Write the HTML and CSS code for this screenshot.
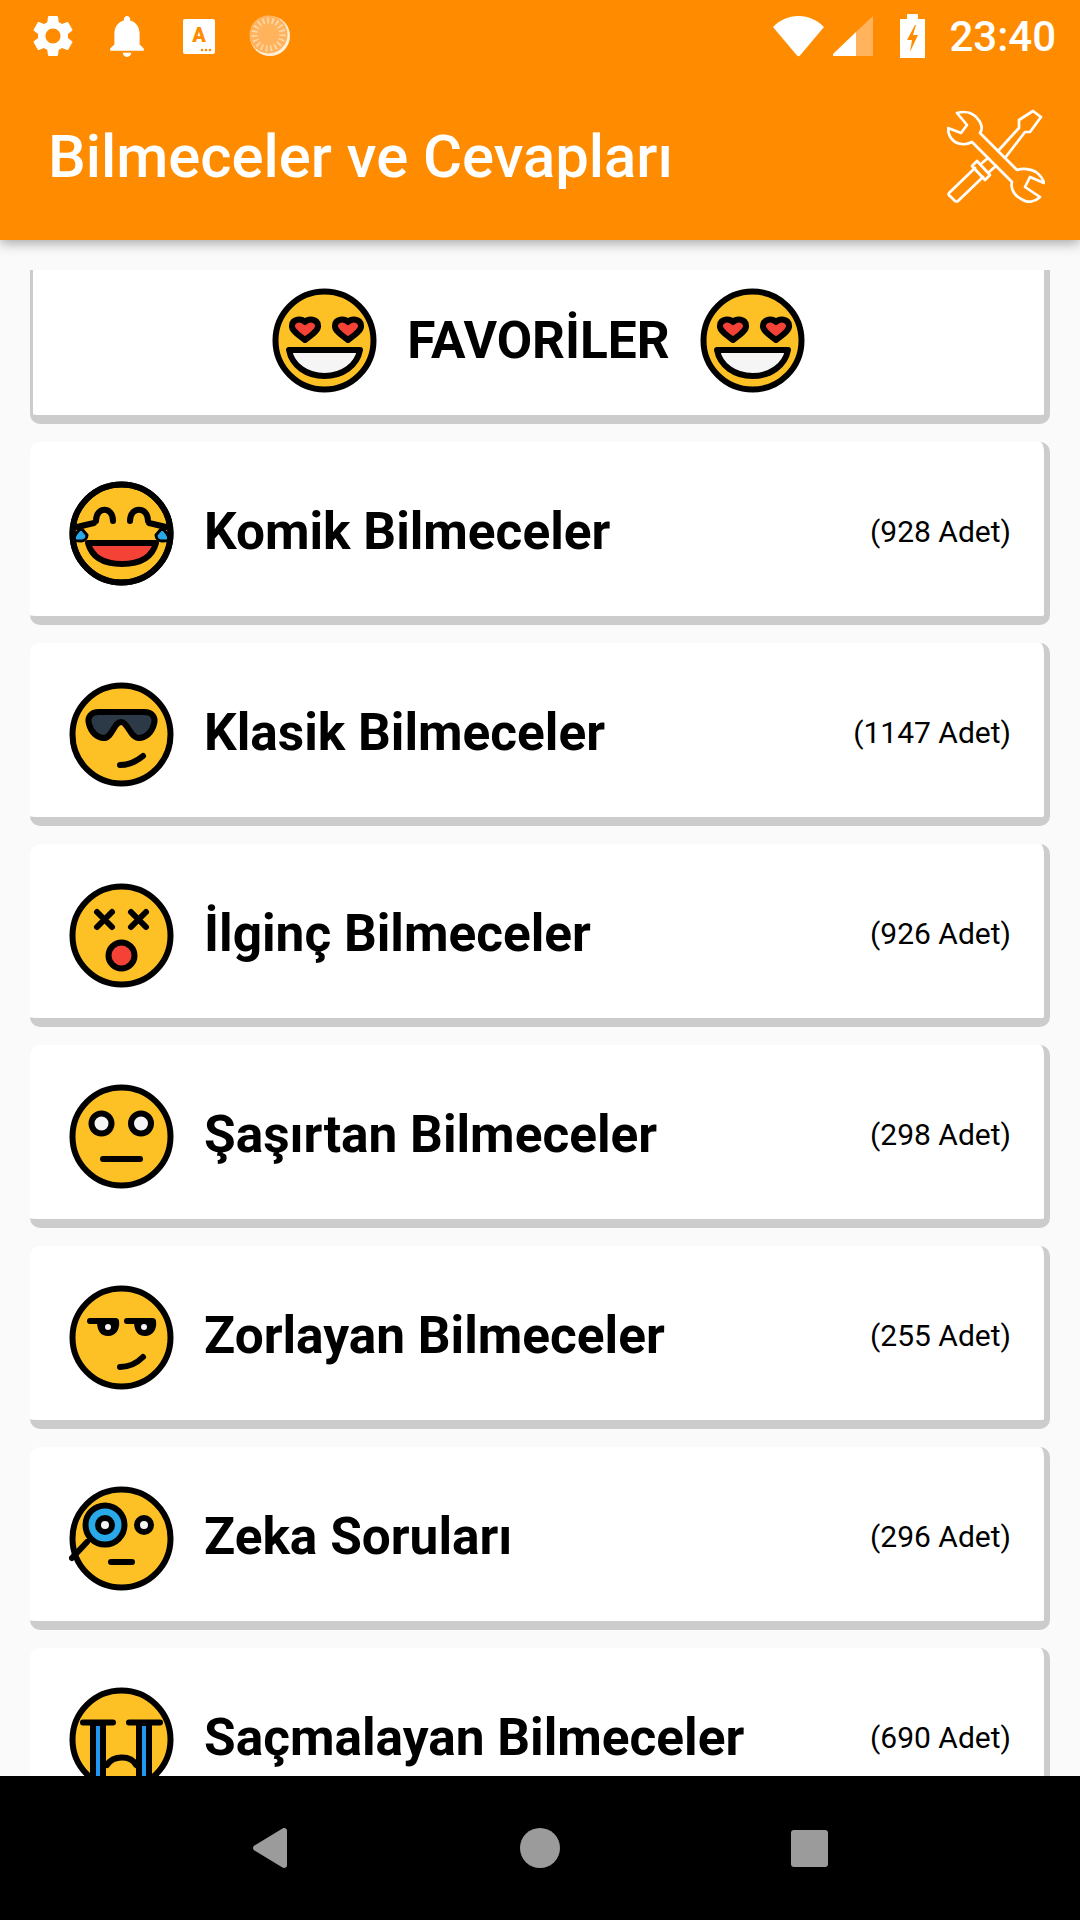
FILE: index.html
```html
<!DOCTYPE html>
<html>
<head>
	<meta charset="utf-8">
	<title>Bilmeceler ve Cevapları</title>
	<link rel="stylesheet" href="styles.css">
</head>
<body>
	<div class="screen">
		<header class="topbar">
			<div class="status">
				<div class="status-left">
					<svg class="ic-gear" viewBox="0 0 24 24"><path fill="#fff" d="M19.14 12.94c.04-.3.06-.61.06-.94s-.02-.64-.07-.94l2.03-1.58c.18-.14.23-.41.12-.61l-1.92-3.32c-.12-.22-.37-.29-.59-.22l-2.39.96c-.5-.38-1.03-.7-1.62-.94l-.36-2.54c-.04-.24-.24-.41-.48-.41h-3.84c-.24 0-.43.17-.47.41l-.36 2.54c-.59.24-1.13.57-1.62.94l-2.39-.96c-.22-.08-.47 0-.59.22L2.74 8.87c-.12.21-.08.47.12.61l2.03 1.58c-.05.3-.09.63-.09.94s.02.64.07.94l-2.03 1.58c-.18.14-.23.41-.12.61l1.92 3.32c.12.22.37.29.59.22l2.39-.96c.5.38 1.03.7 1.62.94l.36 2.54c.05.24.24.41.48.41h3.84c.24 0 .44-.17.47-.41l.36-2.54c.59-.24 1.13-.56 1.62-.94l2.39.96c.22.08.47 0 .59-.22l1.92-3.32c.12-.22.07-.47-.12-.61l-2.01-1.58zM12 15.6c-1.98 0-3.6-1.62-3.6-3.6s1.62-3.6 3.6-3.6 3.6 1.62 3.6 3.6-1.62 3.6-3.6 3.6z"/></svg>
					<svg class="ic-bell" viewBox="4 2.5 16 19.5"><path fill="#fff" d="M12 22c1.1 0 2-.9 2-2h-4c0 1.1.89 2 2 2zm6-6v-5c0-3.07-1.64-5.64-4.5-6.32V4c0-.83-.67-1.5-1.5-1.5s-1.5.67-1.5 1.5v.68C7.63 5.36 6 7.92 6 11v5l-2 2v1h16v-1l-2-2z"/></svg>
					<svg class="ic-app" viewBox="0 0 32 35">
						<rect width="32" height="35" rx="2" fill="#fff"/>
						<text x="16" y="23" text-anchor="middle" font-family="Roboto" font-weight="900" font-size="20" fill="#ff8c00">A</text>
						<circle cx="19" cy="31" r="1.3" fill="#ff8c00"/><circle cx="23" cy="31" r="1.3" fill="#ff8c00"/><circle cx="27" cy="31" r="1.3" fill="#ff8c00"/>
					</svg>
					<svg class="ic-load" viewBox="0 0 42 42">
						<circle cx="21" cy="21" r="20" fill="#fff" opacity=".85"/>
						<circle cx="19.5" cy="19.5" r="19" fill="#ffb35c"/>
						<circle cx="19.5" cy="19.5" r="14" fill="none" stroke="#ffd9ab" stroke-width="6" stroke-dasharray="1.6 3"/>
					</svg>
				</div>
				<div class="status-right">
					<svg class="ic-wifi" viewBox="0 0 51 41"><path fill="#fff" d="M0 11C7 4 15 0 25.500 0S44 4 51 11L27 39.500c-.8 1-2.200 1-3 0z"/></svg>
					<svg class="ic-signal" viewBox="0 0 40 40">
						<path fill="#fff" d="M0 38 23 16V40H2c-2 0-3-1-2-2z"/>
						<path fill="#ffb35c" d="M23 16 40 0V40H23z"/>
					</svg>
					<svg class="ic-batt" viewBox="0 0 25 44">
						<path fill="#fff" d="M7 0h11v5h7v39H0V5h7z"/>
						<path fill="#ff8c00" d="M15 11 7 26h5l-2 12 8-17h-5l3-10z"/>
					</svg>
					<span class="clock">23:40</span>
				</div>
			</div>
			<div class="titlebar">
				<h1 class="title">Bilmeceler ve Cevapları</h1>
				<svg class="ic-tools" viewBox="-1 -1 98 94" fill="none" stroke="#fff" stroke-width="2.700" stroke-linejoin="round" stroke-linecap="round">
					<path d="M9 3C16 1 24 2 29 8 34 13 35 19 32 23L69 60C75 58 83 59 88 62 92 65 95 69 96 73L82 67 77 77 92 87C87 92 80 93 75 90 68 87 62 80 64 72L24 32C19 35 12 35 7 32 3 29 0 24 0 18L13 23 19 15z"/>
					<path d="M50 41 71 18V10L85 1 93 7 82 22H77L57 48"/>
					<path d="M34 53 40 48M41 62 48 56"/>
					<path d="M29 51 42 65 37 70 24 56z"/>
					<path d="M27 58 1 83Q0 85 2 86L7 91Q9 92 10 91L35 67"/>
				</svg>
			</div>
		</header>

		<main class="list">
			<div class="card card-fav">
				<svg class="face" viewBox="0 0 105 105">
					<circle class="skin" cx="52.500" cy="52.500" r="49"/>
					<path class="line" fill="#f44336" d="M33 34c-4-4-12-3-13 3-1 5 6 10 13 15 7-5 14-10 13-15-1-6-9-7-13-3z"/>
					<path class="line" fill="#f44336" d="M76 34c-4-4-12-3-13 3-1 5 6 10 13 15 7-5 14-10 13-15-1-6-9-7-13-3z"/>
					<path class="line" fill="#f5f5f5" d="M17 62H88C85 78 70 88 52.500 88S20 78 17 62z"/>
				</svg>
				<span class="fav-text">FAVORİLER</span>
				<svg class="face" viewBox="0 0 105 105">
					<circle class="skin" cx="52.500" cy="52.500" r="49"/>
					<path class="line" fill="#f44336" d="M33 34c-4-4-12-3-13 3-1 5 6 10 13 15 7-5 14-10 13-15-1-6-9-7-13-3z"/>
					<path class="line" fill="#f44336" d="M76 34c-4-4-12-3-13 3-1 5 6 10 13 15 7-5 14-10 13-15-1-6-9-7-13-3z"/>
					<path class="line" fill="#f5f5f5" d="M17 62H88C85 78 70 88 52.500 88S20 78 17 62z"/>
				</svg>
			</div>

			<div class="card">
				<svg class="face" viewBox="0 0 105 105">
					<circle class="skin" cx="52.500" cy="52.500" r="49"/>
					<path fill="#29a9e8" stroke="#000" stroke-width="3" d="M5 58c0-4 6-10 7-11l6 7c0 4-3 6-6 6-3 0-7 0-7-2zM100 58c0-4-6-10-7-11l-6 7c0 4 3 6 6 6 3 0 7 0 7-2z"/>
					<circle class="ring" cx="52.500" cy="52.500" r="49"/>
					<path class="line" fill="none" d="M27 40c0-15 17-15 17 0M61 40c0-15 18-15 18 0M8 46l17-4M97 46l-17-4"/>
					<path class="line" fill="#f44336" d="M19 62H87C83 77 70 83 53 83S23 77 19 62z"/>
				</svg>
				<span class="name">Komik Bilmeceler</span>
				<span class="count">(928 Adet)</span>
			</div>

			<div class="card">
				<svg class="face" viewBox="0 0 105 105">
					<circle class="skin" cx="52.500" cy="52.500" r="49"/>
					<path class="line" fill="#2c3a47" d="M30 30H75c8 0 12 5 10 12-2 8-8 14-15 14-9 0-11-16-18-16S43 56 35 56c-7 0-13-6-15-14-2-7 2-12 10-12z"/>
					<path class="line" fill="none" d="M51 83C60 83 68 79 74 74"/>
				</svg>
				<span class="name">Klasik Bilmeceler</span>
				<span class="count">(1147 Adet)</span>
			</div>

			<div class="card">
				<svg class="face" viewBox="0 0 105 105">
					<circle class="skin" cx="52.500" cy="52.500" r="49"/>
					<path class="line" fill="none" d="M28 29l15 15M43 29 28 44M62 29l15 15M77 29 62 44"/>
					<circle class="line" fill="#f44336" cx="52.500" cy="72.500" r="13"/>
				</svg>
				<span class="name">İlginç Bilmeceler</span>
				<span class="count">(926 Adet)</span>
			</div>

			<div class="card">
				<svg class="face" viewBox="0 0 105 105">
					<circle class="skin" cx="52.500" cy="52.500" r="49"/>
					<circle class="line" fill="#f5f5f5" cx="32.500" cy="39.500" r="10"/>
					<circle class="line" fill="#f5f5f5" cx="72" cy="39.500" r="10"/>
					<path class="line" fill="none" d="M34 75H71"/>
				</svg>
				<span class="name">Şaşırtan Bilmeceler</span>
				<span class="count">(298 Adet)</span>
			</div>

			<div class="card">
				<svg class="face" viewBox="0 0 105 105">
					<circle class="skin" cx="52.500" cy="52.500" r="49"/>
					<path class="line" fill="#000" d="M21 36H47C48 43 45 48 39 48S31 43 31 36zM58 36H84C85 43 82 48 76 48S68 43 68 36z"/>
					<circle fill="#f5f5f5" cx="39" cy="42" r="3"/>
					<circle fill="#f5f5f5" cx="75" cy="42" r="3"/>
					<path class="line" fill="none" d="M51 82C60 82 68 78 74 72"/>
				</svg>
				<span class="name">Zorlayan Bilmeceler</span>
				<span class="count">(255 Adet)</span>
			</div>

			<div class="card">
				<svg class="face" viewBox="0 0 105 105">
					<circle class="skin" cx="52.500" cy="52.500" r="49"/>
					<path class="line" fill="none" d="M3 72 18 56M42 76H63"/>
					<circle class="line" fill="#29a9e8" cx="36" cy="39" r="19.500"/>
					<circle class="line" fill="#f5f5f5" cx="36" cy="39" r="7"/>
					<circle class="line" fill="#f5f5f5" cx="75" cy="39" r="7"/>
				</svg>
				<span class="name">Zeka Soruları</span>
				<span class="count">(296 Adet)</span>
			</div>

			<div class="card">
				<svg class="face" viewBox="0 0 105 105">
					<circle class="skin" cx="52.500" cy="52.500" r="49"/>
					<rect class="line" fill="#2196f3" x="24" y="36" width="10" height="70"/>
					<rect class="line" fill="#2196f3" x="70" y="36" width="10" height="70"/>
					<path class="line" fill="none" d="M14 35.500H44M60 35.500H91M38 78C44 68 62 68 67 78"/>
				</svg>
				<span class="name">Saçmalayan Bilmeceler</span>
				<span class="count">(690 Adet)</span>
			</div>
		</main>

		<nav class="navbar">
			<svg class="nav-back" viewBox="0 0 34 40"><path fill="#9b9b9b" d="M1.500 17.500 29.500.5c2-1 4.500 0 4.500 2v35c0 2-2.500 3-4.500 2L1.500 22.500c-2-1-2-4 0-5z"/></svg>
			<span class="nav-home"></span>
			<span class="nav-recent"></span>
		</nav>
	</div>
</body>
</html>
```

FILE: styles.css
```css
html,body{
	margin:0px;
	padding:0px;
}
.screen{
	width:1080px;
	height:1920px;
	display:flex;
	flex-direction:column;
	overflow:hidden;
	background-color:#fafafa;
	font-family:Roboto,"Liberation Sans",sans-serif;
}

/* orange header */
.topbar{
	height:240px;
	flex:none;
	background-color:#ff8c00;
	box-shadow:0px 3px 12px rgba(0,0,0,0.35);
	position:relative;
	z-index:2;
	color:white;
}
.status{
	height:72px;
	display:flex;
	justify-content:space-between;
	align-items:center;
	padding:0px 24px 0px 28px;
}
.status-left,.status-right{
	display:flex;
	align-items:center;
}
.ic-gear{
	width:50px;
	height:50px;
}
.ic-bell{
	width:34px;
	height:41px;
	margin-left:32px;
}
.ic-app{
	width:32px;
	height:35px;
	margin-left:39px;
}
.ic-load{
	width:42px;
	height:42px;
	margin-left:34px;
}
.ic-wifi{
	width:51px;
	height:41px;
}
.ic-signal{
	width:40px;
	height:40px;
	margin-left:9px;
}
.ic-batt{
	width:25px;
	height:44px;
	margin-left:27px;
}
.clock{
	font-size:42px;
	font-weight:500;
	margin-left:24px;
}
.titlebar{
	height:168px;
	display:flex;
	justify-content:space-between;
	align-items:center;
	padding:0px 35px 0px 48px;
}
.title{
	margin:2px 0px 0px 0px;
	font-size:59.8px;
	font-weight:500;
}
.ic-tools{
	width:98px;
	height:94px;
}

/* list */
.list{
	flex:1;
	min-height:0;
	overflow:hidden;
	display:flex;
	flex-direction:column;
	gap:18px;
	padding:30px 30px 0px 30px;
}
.card{
	flex:none;
	height:183px;
	box-sizing:border-box;
	display:flex;
	align-items:center;
	background-color:white;
	border-right:6px solid #cccccc;
	border-bottom:9px solid #cccccc;
	border-radius:10px;
	padding:9px 33px 0px 39px;
}
.card-fav{
	height:154px;
	justify-content:center;
	gap:30px;
	border-left:3px solid #cccccc;
	border-radius:0px 0px 10px 10px;
	padding:0px 0px 4px 0px;
}
.fav-text{
	font-size:51.4px;
	font-weight:700;
	color:black;
}
.face{
	width:105px;
	height:105px;
	flex:none;
}
.skin{
	fill:#fdc125;
	stroke:black;
	stroke-width:6;
}
.ring{
	fill:none;
	stroke:black;
	stroke-width:6;
}
.line{
	stroke:black;
	stroke-width:6;
	stroke-linecap:round;
	stroke-linejoin:round;
}
.name{
	flex:1;
	margin:0px 0px 5px 30px;
	font-size:51.4px;
	font-weight:700;
	color:black;
}
.count{
	margin-bottom:5px;
	font-size:30px;
	color:black;
}

/* android buttons */
.navbar{
	height:144px;
	flex:none;
	background-color:black;
	position:relative;
	z-index:2;
	display:flex;
	align-items:center;
	padding:0px 0px 0px 253px;
	box-sizing:border-box;
}
.nav-back{
	width:34px;
	height:40px;
}
.nav-home{
	width:40px;
	height:40px;
	margin-left:233px;
	border-radius:50%;
	background-color:#9b9b9b;
}
.nav-recent{
	width:37px;
	height:37px;
	margin-left:231px;
	border-radius:3px;
	background-color:#9b9b9b;
}
```
